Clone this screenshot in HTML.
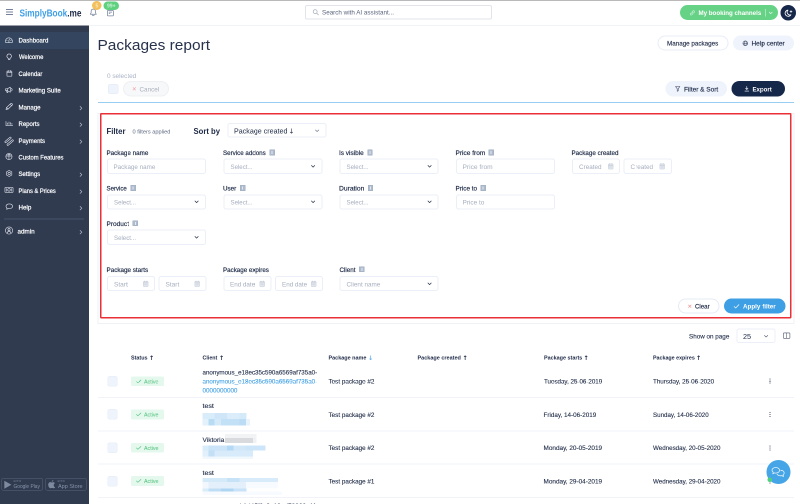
<!DOCTYPE html>
<html lang="en">
<head>
<meta charset="utf-8">
<title>Packages report</title>
<style>
html,body{margin:0;padding:0;}
body{width:800px;height:504px;overflow:hidden;position:relative;background:#fff;font-family:"Liberation Sans",sans-serif;color:#1f2b47;}
*{box-sizing:border-box;}
#wrap{position:absolute;left:0;top:0;width:1600px;height:1008px;transform:scale(0.5);transform-origin:0 0;will-change:transform;overflow:hidden;}
#zm{position:absolute;left:0;top:0;width:800px;height:504px;zoom:2;}
.a{position:absolute;}
.t{position:absolute;white-space:nowrap;}
svg{position:absolute;overflow:visible;}
.si *{fill:none;stroke:#d9dee7;stroke-width:0.65;stroke-linecap:round;stroke-linejoin:round;}
.inp{position:absolute;height:15.1px;border:1px solid #ebeff8;border-radius:2.500px;background:#fff;}
.info{position:absolute;width:5.4px;height:5.6px;border:0.5px solid #9fadc0;background:#aebbcc;border-radius:0.4px;}
.info:after{content:"";position:absolute;left:1.7px;top:0.9px;width:1px;height:2.9px;background:#e4eaf1;}
.cb{position:absolute;left:107.3px;width:10.3px;height:10.4px;border-radius:2px;background:#eef3fc;border:0.5px solid #e6edf9;}
.sep{position:absolute;left:98px;width:696px;height:1px;background:#f1f3f9;}
.badge{position:absolute;left:130.9px;width:33px;height:9.9px;border-radius:1.5px;background:#e5f8ed;}
.bl{position:absolute;}
</style>
</head>
<body>
<div id="wrap"><div id="zm">
<div class="a" style="left:0;top:0;width:800px;height:1px;background:#b9b9b9"></div>
<div class="a" style="left:89px;top:25px;width:711px;height:1px;background:#f0f3f8"></div>
<div class="a" style="left:5.9px;top:9.0px;width:7.2px;height:1px;background:#75819a"></div>
<div class="a" style="left:5.9px;top:11.45px;width:7.2px;height:1px;background:#75819a"></div>
<div class="a" style="left:5.9px;top:13.9px;width:7.2px;height:1px;background:#75819a"></div>
<div class="t" style="top:7.5px;line-height:11.0px;height:11.0px;font-size:10px;color:#3f9fe6;font-weight:bold;left:19.29px;transform-origin:0 50%;transform:scaleX(0.826);">SimplyBook<span style="color:#1d2946">.me</span></div>
<svg style="left:89.6px;top:8.4px" width="7.6" height="7.8" viewBox="0 0 15.2 15.6"><path d="M7.6 1.2c-2.6 0-4.3 2-4.3 4.6v2.9L1.6 11.400h12L11.900 8.700V5.800c0-2.600-1.700-4.600-4.300-4.600zM5.900 13.300a1.800 1.800 0 0 0 3.400 0" fill="none" stroke="#7a869d" stroke-width="1.500" stroke-linejoin="round" stroke-linecap="round"/></svg>
<div class="a" style="left:92.2px;top:1.2px;width:9.300px;height:8.600px;border-radius:5px;background:#f3c05e"></div>
<div class="t" style="top:2.5px;line-height:6.0px;height:6.0px;font-size:5.6px;color:#fce8bf;font-weight:bold;left:95.46px;transform-origin:0 50%;transform:scaleX(0.912);">5</div>
<svg style="left:107.2px;top:10px" width="6.800" height="6.300" viewBox="0 0 13.600 12.600"><rect x="0.800" y="0.800" width="12" height="11" rx="1.500" fill="none" stroke="#7a869d" stroke-width="1.500"/><path d="M3.600 4.300h6.500M3.600 7.300h3" stroke="#7a869d" stroke-width="1.400" fill="none"/></svg>
<div class="a" style="left:103.500px;top:1.500px;width:15.500px;height:8.300px;border-radius:5px;background:#5fd07e"></div>
<div class="t" style="top:2.5px;line-height:6.0px;height:6.0px;font-size:5.3px;color:#c6f1d2;font-weight:bold;left:107.06px;transform-origin:0 50%;transform:scaleX(0.949);">99+</div>
<div class="a" style="left:305px;top:4.900px;width:187px;height:14.800px;border:1px solid #e2e4e9;border-radius:2px;background:#fff"></div>
<svg style="left:312.500px;top:9.100px" width="6.400" height="6.400" viewBox="0 0 12 12"><circle cx="5" cy="5" r="3.700" fill="none" stroke="#9ca5b4" stroke-width="1.200"/><path d="M7.800 7.800L11 11" stroke="#9ca5b4" stroke-width="1.200" stroke-linecap="round"/></svg>
<div class="t" style="top:8.5px;line-height:7.5px;height:7.5px;font-size:6.5px;color:#59647c;left:321.96px;transform-origin:0 50%;transform:scaleX(0.967);">Search with AI assistant...</div>
<div class="a" style="left:680px;top:5px;width:98px;height:15px;background:#66d286;border-radius:8px"></div>
<svg style="left:689px;top:9.400px" width="6.800" height="6.800" viewBox="0 0 12 12"><path d="M4.800 7.200l2.400-2.400M4.200 5.400L2.600 7a1.700 1.700 0 0 0 2.400 2.400L6.600 7.800M7.800 6.600L9.400 5A1.700 1.700 0 0 0 7 2.600L5.400 4.200" fill="none" stroke="#d9f4e1" stroke-width="1" stroke-linecap="round"/></svg>
<div class="t" style="top:9.0px;line-height:7.5px;height:7.5px;font-size:6.6px;color:#fff;font-weight:bold;left:698.43px;transform-origin:0 50%;transform:scaleX(0.936);">My booking channels</div>
<div class="a" style="left:765.200px;top:8.800px;width:0.700px;height:7.600px;background:#a8e6b9"></div>
<svg style="left:768.600px;top:11.300px" width="4.400" height="3" viewBox="0 0 10 7"><path d="M1.500 1.500L5 5l3.500-3.500" fill="none" stroke="#e4f8ea" stroke-width="1.500" stroke-linecap="round"/></svg>
<div class="a" style="left:780.700px;top:5px;width:15.300px;height:15.300px;border-radius:8px;background:#16284a"></div>
<svg style="left:784px;top:8.400px" width="9" height="9" viewBox="0 0 18 18"><path d="M8 3.200a6.200 6.200 0 1 0 5.800 9.300A5.600 5.600 0 0 1 8 3.200z" fill="none" stroke="#fff" stroke-width="1.600" stroke-linejoin="round"/><path d="M14 4.200v4M12 6.200h4" stroke="#fff" stroke-width="1.400" stroke-linecap="round"/></svg>
<div class="a" style="left:0;top:25.300px;width:89px;height:479px;background:#303b50"></div>
<div class="a" style="left:0;top:32px;width:89px;height:17px;background:#34465f"></div>
<div class="t" style="top:36.5px;line-height:7.5px;height:7.5px;font-size:6.5px;color:#fff;left:18.28px;transform-origin:0 50%;transform:scaleX(0.939);-webkit-text-stroke:0.22px #fff;">Dashboard</div>
<div class="t" style="top:53.0px;line-height:7.5px;height:7.5px;font-size:6.5px;color:#fff;left:18.75px;transform-origin:0 50%;transform:scaleX(0.902);-webkit-text-stroke:0.22px #fff;">Welcome</div>
<div class="t" style="top:70.0px;line-height:7.5px;height:7.5px;font-size:6.5px;color:#fff;left:18.48px;transform-origin:0 50%;transform:scaleX(0.903);-webkit-text-stroke:0.22px #fff;">Calendar</div>
<div class="t" style="top:86.5px;line-height:7.5px;height:7.5px;font-size:6.5px;color:#fff;left:18.28px;transform-origin:0 50%;transform:scaleX(0.935);-webkit-text-stroke:0.22px #fff;">Marketing Suite</div>
<div class="t" style="top:103.5px;line-height:7.5px;height:7.5px;font-size:6.5px;color:#fff;left:18.28px;transform-origin:0 50%;transform:scaleX(0.935);-webkit-text-stroke:0.22px #fff;">Manage</div>
<svg style="left:79.700px;top:105.80px" width="3" height="4.400" viewBox="0 0 6 8.800"><path d="M1.200 1l3.600 3.400L1.200 7.800" fill="none" stroke="#c3cad6" stroke-width="1.300" stroke-linecap="round" stroke-linejoin="round"/></svg>
<div class="t" style="top:120.0px;line-height:7.5px;height:7.5px;font-size:6.5px;color:#fff;left:18.29px;transform-origin:0 50%;transform:scaleX(0.925);-webkit-text-stroke:0.22px #fff;">Reports</div>
<svg style="left:79.700px;top:122.40px" width="3" height="4.400" viewBox="0 0 6 8.800"><path d="M1.200 1l3.600 3.400L1.200 7.800" fill="none" stroke="#c3cad6" stroke-width="1.300" stroke-linecap="round" stroke-linejoin="round"/></svg>
<div class="t" style="top:137.0px;line-height:7.5px;height:7.5px;font-size:6.5px;color:#fff;left:18.29px;transform-origin:0 50%;transform:scaleX(0.918);-webkit-text-stroke:0.22px #fff;">Payments</div>
<svg style="left:79.700px;top:139.30px" width="3" height="4.400" viewBox="0 0 6 8.800"><path d="M1.200 1l3.600 3.400L1.200 7.800" fill="none" stroke="#c3cad6" stroke-width="1.300" stroke-linecap="round" stroke-linejoin="round"/></svg>
<div class="t" style="top:153.5px;line-height:7.5px;height:7.5px;font-size:6.5px;color:#fff;left:18.48px;transform-origin:0 50%;transform:scaleX(0.900);-webkit-text-stroke:0.22px #fff;">Custom Features</div>
<div class="t" style="top:170.0px;line-height:7.5px;height:7.5px;font-size:6.5px;color:#fff;left:18.52px;transform-origin:0 50%;transform:scaleX(0.922);-webkit-text-stroke:0.22px #fff;">Settings</div>
<svg style="left:79.700px;top:172.40px" width="3" height="4.400" viewBox="0 0 6 8.800"><path d="M1.200 1l3.600 3.400L1.200 7.800" fill="none" stroke="#c3cad6" stroke-width="1.300" stroke-linecap="round" stroke-linejoin="round"/></svg>
<div class="t" style="top:187.0px;line-height:7.5px;height:7.5px;font-size:6.5px;color:#fff;left:18.31px;transform-origin:0 50%;transform:scaleX(0.881);-webkit-text-stroke:0.22px #fff;">Plans &amp; Prices</div>
<svg style="left:79.700px;top:189.30px" width="3" height="4.400" viewBox="0 0 6 8.800"><path d="M1.200 1l3.600 3.400L1.200 7.800" fill="none" stroke="#c3cad6" stroke-width="1.300" stroke-linecap="round" stroke-linejoin="round"/></svg>
<div class="t" style="top:203.5px;line-height:7.5px;height:7.5px;font-size:6.5px;color:#fff;left:18.27px;transform-origin:0 50%;transform:scaleX(0.960);-webkit-text-stroke:0.22px #fff;">Help</div>
<svg style="left:79.700px;top:205.80px" width="3" height="4.400" viewBox="0 0 6 8.800"><path d="M1.200 1l3.600 3.400L1.200 7.800" fill="none" stroke="#c3cad6" stroke-width="1.300" stroke-linecap="round" stroke-linejoin="round"/></svg>
<div class="a" style="left:4px;top:218.700px;width:80px;height:0.800px;background:#46536a"></div>
<div class="t" style="top:227.5px;line-height:7.5px;height:7.5px;font-size:6.5px;color:#fff;left:17.26px;transform-origin:0 50%;transform:scaleX(0.968);-webkit-text-stroke:0.22px #fff;">admin</div>
<svg style="left:79.700px;top:230px" width="3" height="4.400" viewBox="0 0 6 8.800"><path d="M1.200 1l3.600 3.400L1.200 7.800" fill="none" stroke="#c3cad6" stroke-width="1.300" stroke-linecap="round" stroke-linejoin="round"/></svg>
<div class="t" style="top:36.0px;line-height:17.0px;height:17.0px;font-size:15.2px;color:#27324b;left:97.39px;transform-origin:0 50%;transform:scaleX(1.017);">Packages report</div>
<div class="a" style="left:657.5px;top:35.5px;width:71px;height:15px;border:1px solid #e8edf7;border-radius:8px;background:#fff"></div>
<div class="t" style="top:39.5px;line-height:7.5px;height:7.5px;font-size:6.8px;color:#1f2b47;left:666.89px;transform-origin:0 50%;transform:scaleX(0.923);-webkit-text-stroke:0.150px #1f2b47;">Manage packages</div>
<div class="a" style="left:733.2px;top:35.5px;width:61px;height:15px;border-radius:8px;background:#eef3fc"></div>
<svg style="left:742.4px;top:40.4px" width="5.6" height="5.6" viewBox="0 0 11.2 11.2"><circle cx="5.6" cy="5.6" r="4.7" fill="none" stroke="#3b4660" stroke-width="1.1"/><ellipse cx="5.6" cy="5.6" rx="2" ry="4.7" fill="none" stroke="#3b4660" stroke-width="1"/><path d="M0.9 5.6h9.400" stroke="#3b4660" stroke-width="1"/></svg>
<div class="t" style="top:39.5px;line-height:7.5px;height:7.5px;font-size:6.8px;color:#1f2b47;left:751.28px;transform-origin:0 50%;transform:scaleX(0.954);-webkit-text-stroke:0.150px #1f2b47;">Help center</div>
<div class="t" style="top:72.0px;line-height:7.5px;height:7.5px;font-size:6.5px;color:#a9b3c6;left:106.95px;transform-origin:0 50%;transform:scaleX(0.987);">0 selected</div>
<div class="a" style="left:108px;top:84px;width:10.4px;height:10.2px;border-radius:2px;background:#eef3fc;border:0.5px solid #e3eaf7"></div>
<div class="a" style="left:123px;top:81.2px;width:45.8px;height:15.4px;border-radius:8px;background:#f7f8fa;border:1px solid #eef0f3"></div>
<svg style="left:132.6px;top:87.2px" width="3.6" height="3.600" viewBox="0 0 7.200 7.200"><path d="M1 1l5.200 5.200M6.200 1L1 6.200" stroke="#f4a0a0" stroke-width="1.100" stroke-linecap="round"/></svg>
<div class="t" style="top:85.5px;line-height:7.5px;height:7.5px;font-size:6.8px;color:#a9afbb;left:139.72px;transform-origin:0 50%;transform:scaleX(0.929);">Cancel</div>
<div class="a" style="left:665.600px;top:81.100px;width:61.600px;height:15.500px;border-radius:8px;background:#eef3fc"></div>
<svg style="left:674.800px;top:86px" width="5.400" height="5.800" viewBox="0 0 10.800 11.600"><path d="M1 1h8.800L6.400 5.400v4.400L4.400 10.600V5.400z" fill="none" stroke="#3b4660" stroke-width="1.100" stroke-linejoin="round"/></svg>
<div class="t" style="top:85.5px;line-height:7.5px;height:7.5px;font-size:6.8px;color:#1f2b47;left:683.88px;transform-origin:0 50%;transform:scaleX(0.952);-webkit-text-stroke:0.150px #1f2b47;">Filter &amp; Sort</div>
<div class="a" style="left:731.600px;top:81.100px;width:53.600px;height:15.500px;border-radius:8px;background:#16284a"></div>
<svg style="left:744.600px;top:86.200px" width="4.600" height="5.600" viewBox="0 0 9.200 11.200"><path d="M4.600 0.800v6M2.200 4.600l2.400 2.400 2.400-2.400M0.800 10.200h7.600" fill="none" stroke="#fff" stroke-width="1.200" stroke-linecap="round" stroke-linejoin="round"/></svg>
<div class="t" style="top:85.5px;line-height:7.5px;height:7.5px;font-size:6.5px;color:#fff;font-weight:bold;left:752.43px;transform-origin:0 50%;transform:scaleX(0.934);">Export</div>
<div class="a" style="left:97.800px;top:102px;width:696.400px;height:1px;background:#98cef4"></div>
<div class="a" style="left:97.700px;top:112.800px;width:696.600px;height:211.200px;border:1px solid #eff1f5;background:#fff"></div>
<div class="a" style="left:100.100px;top:113.100px;width:691.500px;height:205.300px;border:1.800px solid #ea3036;border-radius:1.200px"></div>
<div class="t" style="top:127.0px;line-height:8.5px;height:8.5px;font-size:8px;color:#1d2946;font-weight:bold;left:106.31px;transform-origin:0 50%;transform:scaleX(0.971);">Filter</div>
<div class="t" style="top:128.5px;line-height:6.0px;height:6.0px;font-size:5.7px;color:#5d6880;left:132.3px;transform-origin:0 50%;transform:scaleX(0.989);">0 filters applied</div>
<div class="t" style="top:127.0px;line-height:8.5px;height:8.5px;font-size:8px;color:#1d2946;font-weight:bold;left:193.71px;transform-origin:0 50%;transform:scaleX(0.961);">Sort by</div>
<div class="inp" style="left:227.700px;top:122.900px;width:99px;height:14.700px"></div>
<div class="t" style="top:126.5px;line-height:8.5px;height:8.5px;font-size:7.6px;color:#1f2b47;left:234.24px;transform-origin:0 50%;transform:scaleX(0.938);">Package created</div>
<div class="t" style="top:127.5px;line-height:7.5px;height:7.5px;font-size:6.9px;color:#1f2b47;left:288.6px;transform-origin:0 50%;font-family:'DejaVu Sans',sans-serif;">↓</div>
<svg style="left:315px;top:129.4px" width="4.200" height="2.800" viewBox="0 0 8.400 5.600"><path d="M1 1l3.200 3.200L7.400 1" fill="none" stroke="#5d6880" stroke-width="1.2" stroke-linecap="round" stroke-linejoin="round"/></svg>
<div class="t" style="top:149.0px;line-height:7.5px;height:7.5px;font-size:6.7px;color:#1d2946;left:106.38px;transform-origin:0 50%;transform:scaleX(0.937);-webkit-text-stroke:0.180px #1d2946;">Package name</div>
<div class="inp" style="left:106.90px;top:158.7px;width:99px"></div>
<div class="t" style="top:163.0px;line-height:7.5px;height:7.5px;font-size:6.7px;color:#a7afbf;left:113.58px;transform-origin:0 50%;transform:scaleX(0.937);">Package name</div>
<div class="t" style="top:149.0px;line-height:7.5px;height:7.5px;font-size:6.7px;color:#1d2946;left:223.12px;transform-origin:0 50%;transform:scaleX(0.925);-webkit-text-stroke:0.180px #1d2946;">Service addons</div>
<div class="info" style="left:269.50px;top:149.70px"></div>
<div class="inp" style="left:223.40px;top:158.7px;width:99px"></div>
<div class="t" style="top:163.0px;line-height:7.5px;height:7.5px;font-size:6.7px;color:#a7afbf;left:230.33px;transform-origin:0 50%;transform:scaleX(0.910);">Select...</div>
<svg style="left:311.1px;top:165.1px" width="4.200" height="2.800" viewBox="0 0 8.400 5.600"><path d="M1 1l3.200 3.200L7.400 1" fill="none" stroke="#2a3550" stroke-width="1.5" stroke-linecap="round" stroke-linejoin="round"/></svg>
<div class="t" style="top:149.0px;line-height:7.5px;height:7.5px;font-size:6.7px;color:#1d2946;left:339.02px;transform-origin:0 50%;transform:scaleX(0.963);-webkit-text-stroke:0.180px #1d2946;">Is visible</div>
<div class="info" style="left:367.35px;top:149.70px"></div>
<div class="inp" style="left:339.60px;top:158.7px;width:99px"></div>
<div class="t" style="top:163.0px;line-height:7.5px;height:7.5px;font-size:6.7px;color:#a7afbf;left:346.53px;transform-origin:0 50%;transform:scaleX(0.910);">Select...</div>
<svg style="left:427.3px;top:165.1px" width="4.200" height="2.800" viewBox="0 0 8.400 5.600"><path d="M1 1l3.200 3.200L7.400 1" fill="none" stroke="#2a3550" stroke-width="1.5" stroke-linecap="round" stroke-linejoin="round"/></svg>
<div class="t" style="top:149.0px;line-height:7.5px;height:7.5px;font-size:6.7px;color:#1d2946;left:455.26px;transform-origin:0 50%;transform:scaleX(0.978);-webkit-text-stroke:0.180px #1d2946;">Price from</div>
<div class="info" style="left:488.55px;top:149.70px"></div>
<div class="inp" style="left:455.80px;top:158.7px;width:99px"></div>
<div class="t" style="top:163.0px;line-height:7.5px;height:7.5px;font-size:6.7px;color:#a7afbf;left:462.46px;transform-origin:0 50%;transform:scaleX(0.988);">Price from</div>
<div class="t" style="top:149.0px;line-height:7.5px;height:7.5px;font-size:6.7px;color:#1d2946;left:571.49px;transform-origin:0 50%;transform:scaleX(0.935);-webkit-text-stroke:0.180px #1d2946;">Package created</div>
<div class="inp" style="left:572.00px;top:158.7px;width:48.100px"></div>
<div class="t" style="top:163.0px;line-height:7.5px;height:7.5px;font-size:6.7px;color:#a7afbf;left:578.92px;transform-origin:0 50%;transform:scaleX(0.948);">Created</div>
<svg style="left:607.9px;top:163.1px" width="5.400" height="6.400" viewBox="0 0 5.400 6.400"><rect x="0.300" y="0.900" width="4.800" height="5.200" rx="0.600" fill="#e1e5ec" stroke="#ccd3de" stroke-width="0.500"/><path d="M0.300 2.400h4.800" stroke="#c3cbd8" stroke-width="0.600"/><path d="M1.500 0.200v1.300M3.900 0.200v1.300" stroke="#c3cbd8" stroke-width="0.700"/><path d="M1.500 4h2.400" stroke="#cfd5df" stroke-width="0.600"/></svg>
<div class="inp" style="left:623.70px;top:158.7px;width:48.100px"></div>
<div class="t" style="top:163.0px;line-height:7.5px;height:7.5px;font-size:6.7px;color:#a7afbf;left:630.62px;transform-origin:0 50%;transform:scaleX(0.948);">Created</div>
<svg style="left:659.6px;top:163.1px" width="5.400" height="6.400" viewBox="0 0 5.400 6.400"><rect x="0.300" y="0.900" width="4.800" height="5.200" rx="0.600" fill="#e1e5ec" stroke="#ccd3de" stroke-width="0.500"/><path d="M0.300 2.400h4.800" stroke="#c3cbd8" stroke-width="0.600"/><path d="M1.500 0.200v1.300M3.900 0.200v1.300" stroke="#c3cbd8" stroke-width="0.700"/><path d="M1.500 4h2.400" stroke="#cfd5df" stroke-width="0.600"/></svg>
<div class="t" style="top:184.5px;line-height:7.5px;height:7.5px;font-size:6.7px;color:#1d2946;left:106.63px;transform-origin:0 50%;transform:scaleX(0.910);-webkit-text-stroke:0.180px #1d2946;">Service</div>
<div class="info" style="left:130.55px;top:185.20px"></div>
<div class="inp" style="left:106.90px;top:194.3px;width:99px"></div>
<div class="t" style="top:198.5px;line-height:7.5px;height:7.5px;font-size:6.7px;color:#a7afbf;left:113.83px;transform-origin:0 50%;transform:scaleX(0.910);">Select...</div>
<svg style="left:194.6px;top:200.7px" width="4.200" height="2.800" viewBox="0 0 8.400 5.600"><path d="M1 1l3.200 3.200L7.400 1" fill="none" stroke="#2a3550" stroke-width="1.5" stroke-linecap="round" stroke-linejoin="round"/></svg>
<div class="t" style="top:184.5px;line-height:7.5px;height:7.5px;font-size:6.7px;color:#1d2946;left:222.93px;transform-origin:0 50%;transform:scaleX(0.936);-webkit-text-stroke:0.180px #1d2946;">User</div>
<div class="info" style="left:239.95px;top:185.20px"></div>
<div class="inp" style="left:223.40px;top:194.3px;width:99px"></div>
<div class="t" style="top:198.5px;line-height:7.5px;height:7.5px;font-size:6.7px;color:#a7afbf;left:230.33px;transform-origin:0 50%;transform:scaleX(0.910);">Select...</div>
<svg style="left:311.1px;top:200.7px" width="4.200" height="2.800" viewBox="0 0 8.400 5.600"><path d="M1 1l3.200 3.200L7.400 1" fill="none" stroke="#2a3550" stroke-width="1.5" stroke-linecap="round" stroke-linejoin="round"/></svg>
<div class="t" style="top:184.5px;line-height:7.5px;height:7.5px;font-size:6.7px;color:#1d2946;left:339.05px;transform-origin:0 50%;-webkit-text-stroke:0.180px #1d2946;">Duration</div>
<div class="info" style="left:367.85px;top:185.20px"></div>
<div class="inp" style="left:339.60px;top:194.3px;width:99px"></div>
<div class="t" style="top:198.5px;line-height:7.5px;height:7.5px;font-size:6.7px;color:#a7afbf;left:346.53px;transform-origin:0 50%;transform:scaleX(0.910);">Select...</div>
<svg style="left:427.3px;top:200.7px" width="4.200" height="2.800" viewBox="0 0 8.400 5.600"><path d="M1 1l3.200 3.200L7.400 1" fill="none" stroke="#2a3550" stroke-width="1.5" stroke-linecap="round" stroke-linejoin="round"/></svg>
<div class="t" style="top:184.5px;line-height:7.5px;height:7.5px;font-size:6.7px;color:#1d2946;left:455.28px;transform-origin:0 50%;transform:scaleX(0.950);-webkit-text-stroke:0.180px #1d2946;">Price to</div>
<div class="info" style="left:480.45px;top:185.20px"></div>
<div class="inp" style="left:455.80px;top:194.3px;width:99px"></div>
<div class="t" style="top:198.5px;line-height:7.5px;height:7.5px;font-size:6.7px;color:#a7afbf;left:462.47px;transform-origin:0 50%;transform:scaleX(0.964);">Price to</div>
<div class="t" style="top:220.0px;line-height:7.5px;height:7.5px;font-size:6.7px;color:#1d2946;left:106.37px;transform-origin:0 50%;transform:scaleX(0.972);-webkit-text-stroke:0.180px #1d2946;">Product</div>
<div class="info" style="left:132.65px;top:220.50px"></div>
<div class="inp" style="left:106.90px;top:229.7px;width:99px"></div>
<div class="t" style="top:234.0px;line-height:7.5px;height:7.5px;font-size:6.7px;color:#a7afbf;left:113.83px;transform-origin:0 50%;transform:scaleX(0.910);">Select...</div>
<svg style="left:194.6px;top:236.1px" width="4.200" height="2.800" viewBox="0 0 8.400 5.600"><path d="M1 1l3.200 3.200L7.400 1" fill="none" stroke="#2a3550" stroke-width="1.5" stroke-linecap="round" stroke-linejoin="round"/></svg>
<div class="t" style="top:266.0px;line-height:7.5px;height:7.5px;font-size:6.7px;color:#1d2946;left:106.38px;transform-origin:0 50%;transform:scaleX(0.939);-webkit-text-stroke:0.180px #1d2946;">Package starts</div>
<div class="inp" style="left:106.90px;top:276.1px;width:48.100px"></div>
<div class="t" style="top:280.5px;line-height:7.5px;height:7.5px;font-size:6.7px;color:#a7afbf;left:113.81px;transform-origin:0 50%;transform:scaleX(0.976);">Start</div>
<svg style="left:142.8px;top:280.5px" width="5.400" height="6.400" viewBox="0 0 5.400 6.400"><rect x="0.300" y="0.900" width="4.800" height="5.200" rx="0.600" fill="#e1e5ec" stroke="#ccd3de" stroke-width="0.500"/><path d="M0.300 2.400h4.800" stroke="#c3cbd8" stroke-width="0.600"/><path d="M1.500 0.200v1.300M3.900 0.200v1.300" stroke="#c3cbd8" stroke-width="0.700"/><path d="M1.500 4h2.400" stroke="#cfd5df" stroke-width="0.600"/></svg>
<div class="inp" style="left:158.60px;top:276.1px;width:48.100px"></div>
<div class="t" style="top:280.5px;line-height:7.5px;height:7.5px;font-size:6.7px;color:#a7afbf;left:165.51px;transform-origin:0 50%;transform:scaleX(0.976);">Start</div>
<svg style="left:194.5px;top:280.5px" width="5.400" height="6.400" viewBox="0 0 5.400 6.400"><rect x="0.300" y="0.900" width="4.800" height="5.200" rx="0.600" fill="#e1e5ec" stroke="#ccd3de" stroke-width="0.500"/><path d="M0.300 2.400h4.800" stroke="#c3cbd8" stroke-width="0.600"/><path d="M1.500 0.200v1.300M3.900 0.200v1.300" stroke="#c3cbd8" stroke-width="0.700"/><path d="M1.500 4h2.400" stroke="#cfd5df" stroke-width="0.600"/></svg>
<div class="t" style="top:266.0px;line-height:7.5px;height:7.5px;font-size:6.7px;color:#1d2946;left:222.89px;transform-origin:0 50%;transform:scaleX(0.927);-webkit-text-stroke:0.180px #1d2946;">Package expires</div>
<div class="inp" style="left:223.40px;top:276.1px;width:48.100px"></div>
<div class="t" style="top:280.5px;line-height:7.5px;height:7.5px;font-size:6.7px;color:#a7afbf;left:230.08px;transform-origin:0 50%;transform:scaleX(0.939);">End date</div>
<svg style="left:259.3px;top:280.5px" width="5.400" height="6.400" viewBox="0 0 5.400 6.400"><rect x="0.300" y="0.900" width="4.800" height="5.200" rx="0.600" fill="#e1e5ec" stroke="#ccd3de" stroke-width="0.500"/><path d="M0.300 2.400h4.800" stroke="#c3cbd8" stroke-width="0.600"/><path d="M1.500 0.200v1.300M3.900 0.200v1.300" stroke="#c3cbd8" stroke-width="0.700"/><path d="M1.500 4h2.400" stroke="#cfd5df" stroke-width="0.600"/></svg>
<div class="inp" style="left:275.10px;top:276.1px;width:48.100px"></div>
<div class="t" style="top:280.5px;line-height:7.5px;height:7.5px;font-size:6.7px;color:#a7afbf;left:281.78px;transform-origin:0 50%;transform:scaleX(0.939);">End date</div>
<svg style="left:311.0px;top:280.5px" width="5.400" height="6.400" viewBox="0 0 5.400 6.400"><rect x="0.300" y="0.900" width="4.800" height="5.200" rx="0.600" fill="#e1e5ec" stroke="#ccd3de" stroke-width="0.500"/><path d="M0.300 2.400h4.800" stroke="#c3cbd8" stroke-width="0.600"/><path d="M1.500 0.200v1.300M3.900 0.200v1.300" stroke="#c3cbd8" stroke-width="0.700"/><path d="M1.500 4h2.400" stroke="#cfd5df" stroke-width="0.600"/></svg>
<div class="t" style="top:266.0px;line-height:7.5px;height:7.5px;font-size:6.7px;color:#1d2946;left:339.32px;transform-origin:0 50%;transform:scaleX(0.936);-webkit-text-stroke:0.180px #1d2946;">Client</div>
<div class="info" style="left:359.20px;top:266.60px"></div>
<div class="inp" style="left:339.60px;top:276.1px;width:99px"></div>
<div class="t" style="top:280.5px;line-height:7.5px;height:7.5px;font-size:6.7px;color:#a7afbf;left:346.52px;transform-origin:0 50%;transform:scaleX(0.947);">Client name</div>
<svg style="left:427.3px;top:282.5px" width="4.200" height="2.800" viewBox="0 0 8.400 5.600"><path d="M1 1l3.200 3.200L7.400 1" fill="none" stroke="#2a3550" stroke-width="1.5" stroke-linecap="round" stroke-linejoin="round"/></svg>
<div class="a" style="left:678.100px;top:298.300px;width:41.500px;height:15.200px;border-radius:8px;background:#fff;border:1px solid #e6ebf6"></div>
<svg style="left:687.900px;top:304.300px" width="3.600" height="3.600" viewBox="0 0 7.200 7.200"><path d="M1 1l5.200 5.200M6.200 1L1 6.200" stroke="#f08a8a" stroke-width="1.100" stroke-linecap="round"/></svg>
<div class="t" style="top:302.5px;line-height:7.5px;height:7.5px;font-size:6.8px;color:#1f2b47;left:694.93px;transform-origin:0 50%;transform:scaleX(0.900);-webkit-text-stroke:0.180px #1f2b47;">Clear</div>
<div class="a" style="left:724px;top:298.300px;width:61.400px;height:15.200px;border-radius:8px;background:#3f9fe4"></div>
<svg style="left:733.600px;top:303.800px" width="6" height="4.600" viewBox="0 0 12 9.200"><path d="M1.200 5l3.200 3L10.800 1.200" fill="none" stroke="#fff" stroke-width="1.300" stroke-linecap="round" stroke-linejoin="round"/></svg>
<div class="t" style="top:302.5px;line-height:7.5px;height:7.5px;font-size:6.5px;color:#fff;font-weight:bold;left:742.96px;transform-origin:0 50%;transform:scaleX(0.964);">Apply filter</div>
<div class="t" style="top:332.5px;line-height:7.5px;height:7.5px;font-size:6.7px;color:#1f2b47;left:689.22px;transform-origin:0 50%;transform:scaleX(0.942);-webkit-text-stroke:0.120px #1f2b47;">Show on page</div>
<div class="inp" style="left:736.3px;top:328.5px;width:39px;height:14.7px"></div>
<div class="t" style="top:332.0px;line-height:8.5px;height:8.5px;font-size:7.6px;color:#1f2b47;left:743.06px;transform-origin:0 50%;transform:scaleX(0.958);">25</div>
<svg style="left:764.2px;top:334.8px" width="4.200" height="2.800" viewBox="0 0 8.400 5.600"><path d="M1 1l3.200 3.200L7.400 1" fill="none" stroke="#4a556c" stroke-width="1.2" stroke-linecap="round" stroke-linejoin="round"/></svg>
<svg style="left:782.9px;top:332.4px" width="7.3" height="6.2" viewBox="0 0 14.6 12.4"><rect x="0.8" y="0.8" width="13" height="10.8" rx="1" fill="none" stroke="#4a556c" stroke-width="1.2"/><path d="M7.300 0.800v10.800" stroke="#4a556c" stroke-width="1.100"/></svg>
<div class="t" style="top:354.5px;line-height:6.0px;height:6.0px;font-size:5.7px;color:#1d2946;font-weight:bold;left:130.76px;transform-origin:0 50%;transform:scaleX(0.950);">Status</div>
<div class="t" style="top:354.5px;line-height:7.0px;height:7.0px;font-size:6.2px;color:#1d2946;font-weight:bold;left:148.78px;transform-origin:0 50%;transform:scaleX(1.018);font-family:'DejaVu Sans',sans-serif;">↑</div>
<div class="t" style="top:354.5px;line-height:6.0px;height:6.0px;font-size:5.7px;color:#1d2946;font-weight:bold;left:202.51px;transform-origin:0 50%;transform:scaleX(0.937);">Client</div>
<div class="t" style="top:354.5px;line-height:7.0px;height:7.0px;font-size:6.2px;color:#1d2946;font-weight:bold;left:218.98px;transform-origin:0 50%;transform:scaleX(1.018);font-family:'DejaVu Sans',sans-serif;">↑</div>
<div class="t" style="top:354.5px;line-height:6.0px;height:6.0px;font-size:5.7px;color:#1d2946;font-weight:bold;left:328.41px;transform-origin:0 50%;transform:scaleX(0.959);">Package name</div>
<div class="t" style="top:354.5px;line-height:7.0px;height:7.0px;font-size:6.2px;color:#62b1ec;font-weight:bold;left:367.93px;transform-origin:0 50%;transform:scaleX(1.018);font-family:'DejaVu Sans',sans-serif;">↓</div>
<div class="t" style="top:354.5px;line-height:6.0px;height:6.0px;font-size:5.7px;color:#1d2946;font-weight:bold;left:417.66px;transform-origin:0 50%;transform:scaleX(0.965);">Package created</div>
<div class="t" style="top:354.5px;line-height:7.0px;height:7.0px;font-size:6.2px;color:#1d2946;font-weight:bold;left:462.43px;transform-origin:0 50%;transform:scaleX(1.018);font-family:'DejaVu Sans',sans-serif;">↑</div>
<div class="t" style="top:354.5px;line-height:6.0px;height:6.0px;font-size:5.7px;color:#1d2946;font-weight:bold;left:543.92px;transform-origin:0 50%;transform:scaleX(0.952);">Package starts</div>
<div class="t" style="top:354.5px;line-height:7.0px;height:7.0px;font-size:6.2px;color:#1d2946;font-weight:bold;left:583.68px;transform-origin:0 50%;transform:scaleX(1.018);font-family:'DejaVu Sans',sans-serif;">↑</div>
<div class="t" style="top:354.5px;line-height:6.0px;height:6.0px;font-size:5.7px;color:#1d2946;font-weight:bold;left:652.77px;transform-origin:0 50%;transform:scaleX(0.936);">Package expires</div>
<div class="t" style="top:354.5px;line-height:7.0px;height:7.0px;font-size:6.2px;color:#1d2946;font-weight:bold;left:696.08px;transform-origin:0 50%;transform:scaleX(1.018);font-family:'DejaVu Sans',sans-serif;">↑</div>
<div class="sep" style="top:397.0px"></div>
<div class="sep" style="top:430.3px"></div>
<div class="sep" style="top:463.7px"></div>
<div class="sep" style="top:497.0px"></div>
<div class="cb" style="top:376.00px"></div>
<div class="badge" style="top:376.25px"></div>
<svg style="left:136px;top:379.30px" width="5.400" height="3.800" viewBox="0 0 10.800 7.600"><path d="M1 4l2.800 2.600L9.800 1" fill="none" stroke="#4cc07a" stroke-width="1.200" stroke-linecap="round" stroke-linejoin="round"/></svg>
<div class="t" style="top:378.5px;line-height:6.0px;height:6.0px;font-size:5.8px;color:#4cc07a;left:144.2px;transform-origin:0 50%;transform:scaleX(0.919);">Active</div>
<div class="t" style="top:377.5px;line-height:7.5px;height:7.5px;font-size:6.7px;color:#1f2b47;left:328.61px;transform-origin:0 50%;transform:scaleX(0.942);-webkit-text-stroke:0.120px #1f2b47;">Test package #2</div>
<div class="t" style="top:377.5px;line-height:7.5px;height:7.5px;font-size:6.7px;color:#1f2b47;left:543.76px;transform-origin:0 50%;transform:scaleX(0.925);-webkit-text-stroke:0.120px #1f2b47;">Tuesday, 25-06-2019</div>
<div class="t" style="top:377.5px;line-height:7.5px;height:7.5px;font-size:6.7px;color:#1f2b47;left:652.96px;transform-origin:0 50%;transform:scaleX(0.935);-webkit-text-stroke:0.120px #1f2b47;">Thursday, 25-06-2020</div>
<div class="a" style="left:769.300px;top:378.65px;width:1.100px;height:1.100px;border-radius:0.300px;background:#3f4a62"></div>
<div class="a" style="left:769.300px;top:380.65px;width:1.100px;height:1.100px;border-radius:0.300px;background:#3f4a62"></div>
<div class="a" style="left:769.300px;top:382.65px;width:1.100px;height:1.100px;border-radius:0.300px;background:#3f4a62"></div>
<div class="cb" style="top:409.20px"></div>
<div class="badge" style="top:409.45px"></div>
<svg style="left:136px;top:412.50px" width="5.400" height="3.800" viewBox="0 0 10.800 7.600"><path d="M1 4l2.800 2.600L9.800 1" fill="none" stroke="#4cc07a" stroke-width="1.200" stroke-linecap="round" stroke-linejoin="round"/></svg>
<div class="t" style="top:411.5px;line-height:6.0px;height:6.0px;font-size:5.8px;color:#4cc07a;left:144.2px;transform-origin:0 50%;transform:scaleX(0.919);">Active</div>
<div class="t" style="top:411.0px;line-height:7.5px;height:7.5px;font-size:6.7px;color:#1f2b47;left:328.61px;transform-origin:0 50%;transform:scaleX(0.942);-webkit-text-stroke:0.120px #1f2b47;">Test package #2</div>
<div class="t" style="top:411.0px;line-height:7.5px;height:7.5px;font-size:6.7px;color:#1f2b47;left:543.38px;transform-origin:0 50%;transform:scaleX(0.941);-webkit-text-stroke:0.120px #1f2b47;">Friday, 14-06-2019</div>
<div class="t" style="top:411.0px;line-height:7.5px;height:7.5px;font-size:6.7px;color:#1f2b47;left:652.82px;transform-origin:0 50%;transform:scaleX(0.925);-webkit-text-stroke:0.120px #1f2b47;">Sunday, 14-06-2020</div>
<div class="a" style="left:769.300px;top:411.85px;width:1.100px;height:1.100px;border-radius:0.300px;background:#3f4a62"></div>
<div class="a" style="left:769.300px;top:413.85px;width:1.100px;height:1.100px;border-radius:0.300px;background:#3f4a62"></div>
<div class="a" style="left:769.300px;top:415.85px;width:1.100px;height:1.100px;border-radius:0.300px;background:#3f4a62"></div>
<div class="cb" style="top:442.60px"></div>
<div class="badge" style="top:442.85px"></div>
<svg style="left:136px;top:445.90px" width="5.400" height="3.800" viewBox="0 0 10.800 7.600"><path d="M1 4l2.800 2.600L9.800 1" fill="none" stroke="#4cc07a" stroke-width="1.200" stroke-linecap="round" stroke-linejoin="round"/></svg>
<div class="t" style="top:445.0px;line-height:6.0px;height:6.0px;font-size:5.8px;color:#4cc07a;left:144.2px;transform-origin:0 50%;transform:scaleX(0.919);">Active</div>
<div class="t" style="top:444.0px;line-height:7.5px;height:7.5px;font-size:6.7px;color:#1f2b47;left:328.61px;transform-origin:0 50%;transform:scaleX(0.942);-webkit-text-stroke:0.120px #1f2b47;">Test package #2</div>
<div class="t" style="top:444.0px;line-height:7.5px;height:7.5px;font-size:6.7px;color:#1f2b47;left:543.37px;transform-origin:0 50%;transform:scaleX(0.956);-webkit-text-stroke:0.120px #1f2b47;">Monday, 20-05-2019</div>
<div class="t" style="top:444.0px;line-height:7.5px;height:7.5px;font-size:6.7px;color:#1f2b47;left:653.1px;transform-origin:0 50%;transform:scaleX(0.928);-webkit-text-stroke:0.120px #1f2b47;">Wednesday, 20-05-2020</div>
<div class="a" style="left:769.300px;top:445.25px;width:1.100px;height:1.100px;border-radius:0.300px;background:#3f4a62"></div>
<div class="a" style="left:769.300px;top:447.25px;width:1.100px;height:1.100px;border-radius:0.300px;background:#3f4a62"></div>
<div class="a" style="left:769.300px;top:449.25px;width:1.100px;height:1.100px;border-radius:0.300px;background:#3f4a62"></div>
<div class="cb" style="top:475.90px"></div>
<div class="badge" style="top:476.15px"></div>
<svg style="left:136px;top:479.20px" width="5.400" height="3.800" viewBox="0 0 10.800 7.600"><path d="M1 4l2.800 2.600L9.800 1" fill="none" stroke="#4cc07a" stroke-width="1.200" stroke-linecap="round" stroke-linejoin="round"/></svg>
<div class="t" style="top:478.0px;line-height:6.0px;height:6.0px;font-size:5.8px;color:#4cc07a;left:144.2px;transform-origin:0 50%;transform:scaleX(0.919);">Active</div>
<div class="t" style="top:477.5px;line-height:7.5px;height:7.5px;font-size:6.7px;color:#1f2b47;left:328.61px;transform-origin:0 50%;transform:scaleX(0.942);-webkit-text-stroke:0.120px #1f2b47;">Test package #1</div>
<div class="t" style="top:477.5px;line-height:7.5px;height:7.5px;font-size:6.7px;color:#1f2b47;left:543.37px;transform-origin:0 50%;transform:scaleX(0.956);-webkit-text-stroke:0.120px #1f2b47;">Monday, 29-04-2019</div>
<div class="t" style="top:477.5px;line-height:7.5px;height:7.5px;font-size:6.7px;color:#1f2b47;left:653.1px;transform-origin:0 50%;transform:scaleX(0.928);-webkit-text-stroke:0.120px #1f2b47;">Wednesday, 29-04-2020</div>
<div class="a" style="left:769.300px;top:478.55px;width:1.100px;height:1.100px;border-radius:0.300px;background:#3f4a62"></div>
<div class="a" style="left:769.300px;top:480.55px;width:1.100px;height:1.100px;border-radius:0.300px;background:#3f4a62"></div>
<div class="a" style="left:769.300px;top:482.55px;width:1.100px;height:1.100px;border-radius:0.300px;background:#3f4a62"></div>
<div class="t" style="top:368.5px;line-height:7.5px;height:7.5px;font-size:6.7px;color:#1f2b47;left:202.27px;transform-origin:0 50%;transform:scaleX(0.928);-webkit-text-stroke:0.120px #1f2b47;">anonymous_e18ec35c590a6569af735a0-</div>
<div class="t" style="top:377.5px;line-height:7.5px;height:7.5px;font-size:6.7px;color:#3f9fe4;left:202.27px;transform-origin:0 50%;transform:scaleX(0.928);-webkit-text-stroke:0.100px #3f9fe4;">anonymous_e18ec35c590a6569af735a0-</div>
<div class="t" style="top:386.5px;line-height:7.5px;height:7.5px;font-size:6.7px;color:#3f9fe4;left:202.27px;transform-origin:0 50%;transform:scaleX(0.938);-webkit-text-stroke:0.100px #3f9fe4;">0000000000</div>
<div class="t" style="top:402.0px;line-height:7.5px;height:7.5px;font-size:6.7px;color:#1f2b47;left:202.39px;transform-origin:0 50%;transform:scaleX(1.053);-webkit-text-stroke:0.120px #1f2b47;">test</div>
<div class="t" style="top:436.0px;line-height:7.5px;height:7.5px;font-size:6.7px;color:#1f2b47;left:202.5px;transform-origin:0 50%;transform:scaleX(0.978);-webkit-text-stroke:0.120px #1f2b47;">Viktoria</div>
<div class="t" style="top:469.0px;line-height:7.5px;height:7.5px;font-size:6.7px;color:#1f2b47;left:202.39px;transform-origin:0 50%;transform:scaleX(1.053);-webkit-text-stroke:0.120px #1f2b47;">test</div>
<div class="t" style="top:502.0px;line-height:7.5px;height:7.5px;font-size:6.7px;color:#1f2b47;left:202.26px;transform-origin:0 50%;transform:scaleX(0.969);">anonymous_b1d47f0c3e18ad78866a1f-</div>
<div class="bl" style="left:202.3px;top:413px;width:12.6px;height:6.1px;background:#d9ecfa"></div>
<div class="bl" style="left:214.7px;top:413px;width:12.6px;height:6.1px;background:#cfe6f8"></div>
<div class="bl" style="left:227.1px;top:413px;width:12.6px;height:6.1px;background:#dbedfa"></div>
<div class="bl" style="left:239.5px;top:413px;width:6.8px;height:6.1px;background:#d5eaf9"></div>
<div class="bl" style="left:202.3px;top:418.9px;width:6.4px;height:6.4px;background:#e3f1fb"></div>
<div class="bl" style="left:208.5px;top:418.9px;width:6.4px;height:6.4px;background:#b9dcf5"></div>
<div class="bl" style="left:214.7px;top:418.9px;width:6.4px;height:6.4px;background:#d5eaf9"></div>
<div class="bl" style="left:220.9px;top:418.9px;width:18.8px;height:6.4px;background:#c2e0f6"></div>
<div class="bl" style="left:239.5px;top:418.9px;width:6.8px;height:6.4px;background:#bcdcf5"></div>
<div class="bl" style="left:246.1px;top:418.9px;width:4.1px;height:6.4px;background:#e8f3fc"></div>
<div class="bl" style="left:225px;top:434.1px;width:31.7px;height:4.1px;background:#f2f3f5"></div>
<div class="bl" style="left:225px;top:438px;width:28.3px;height:5.1px;background:#d8dade"></div>
<div class="bl" style="left:253.1px;top:438px;width:3.6px;height:5.1px;background:#f0f1f3"></div>
<div class="bl" style="left:202.3px;top:445.4px;width:6.4px;height:5.2px;background:#d9ecfa"></div>
<div class="bl" style="left:208.5px;top:445.4px;width:18.8px;height:5.2px;background:#cbe4f8"></div>
<div class="bl" style="left:227.1px;top:445.4px;width:6.4px;height:5.2px;background:#b5d9f4"></div>
<div class="bl" style="left:233.3px;top:445.4px;width:12.6px;height:5.2px;background:#d2e8f9"></div>
<div class="bl" style="left:245.7px;top:445.4px;width:19.7px;height:5.2px;background:#cde5f8"></div>
<div class="bl" style="left:202.3px;top:450.4px;width:6.4px;height:6.4px;background:#e1f0fb"></div>
<div class="bl" style="left:208.5px;top:450.4px;width:6.4px;height:6.4px;background:#c2dff6"></div>
<div class="bl" style="left:214.7px;top:450.4px;width:38.3px;height:6.4px;background:#d7ebfa"></div>
<div class="bl" style="left:202.3px;top:456.6px;width:50.7px;height:2.6px;background:#f0f7fd"></div>
<div class="bl" style="left:202.3px;top:477.8px;width:25.0px;height:4.5px;background:#d5eaf9"></div>
<div class="bl" style="left:227.1px;top:477.8px;width:12.6px;height:4.5px;background:#c6e2f7"></div>
<div class="bl" style="left:239.5px;top:477.8px;width:38.6px;height:4.5px;background:#d7ebfa"></div>
<div class="bl" style="left:202.3px;top:482.1px;width:6.4px;height:6.6px;background:#f1f7fd"></div>
<div class="bl" style="left:208.5px;top:482.1px;width:37.8px;height:6.6px;background:#e3f0fb"></div>
<div class="bl" style="left:246.1px;top:482.1px;width:32.0px;height:6.6px;background:#f7fafe"></div>
<div class="bl" style="left:202.3px;top:488.5px;width:6.4px;height:3.0px;background:#d9ecfa"></div>
<div class="bl" style="left:208.5px;top:488.5px;width:12.6px;height:3.0px;background:#bfdef6"></div>
<div class="bl" style="left:220.9px;top:488.5px;width:12.6px;height:3.0px;background:#aed6f3"></div>
<div class="bl" style="left:233.3px;top:488.5px;width:13.0px;height:3.0px;background:#c8e3f7"></div>
<div class="bl" style="left:202.3px;top:491.3px;width:79.9px;height:3.9px;background:#f7fafe"></div>
<div class="a" style="left:766.400px;top:460.100px;width:24px;height:24px;border-radius:12px;background:#45a5e6"></div>
<svg style="left:771.400px;top:467px" width="13.200" height="10.200" viewBox="0 0 13.200 10.200"><path d="M4.300 0.500c2.100 0 3.800 1.200 3.800 2.800s-1.700 2.800-3.800 2.800c-0.500 0-0.900-0.100-1.300-0.200l-1.700 0.900l0.400-1.600c-0.800-0.500-1.200-1.200-1.200-1.900c0-1.600 1.700-2.800 3.800-2.800z" fill="none" stroke="#eaf4fc" stroke-width="0.800" stroke-linejoin="round"/><path d="M9.300 3.300c1.900 0.100 3.400 1.200 3.400 2.700c0 0.700-0.400 1.400-1.100 1.900l0.400 1.600l-1.700-0.900c-0.400 0.100-0.800 0.200-1.300 0.200c-1.500 0-2.800-0.600-3.400-1.600" fill="none" stroke="#eaf4fc" stroke-width="0.800" stroke-linejoin="round" stroke-linecap="round"/></svg>
<div class="a" style="left:767.600px;top:477.500px;width:4.400px;height:4.400px;border-radius:3px;background:#4fd07c"></div>
<svg class="si" style="left:5.1px;top:37.6px" width="7.8" height="5.6" viewBox="0 0 7.8 5.6"><path d="M1 5.100h5.800a0.600 0.600 0 0 0 0.600-0.600v-0.700a3.500 3.500 0 0 0-7 0v0.700a0.600 0.600 0 0 0 0.600 0.600z"/><path d="M3.900 5v-2.200l0.700-1.300"/><path d="M1.600 2.600l0.500 0.400M6.200 2.600l-0.500 0.400"/></svg>
<svg class="si" style="left:6.7px;top:53.5px" width="5.3" height="6.7" viewBox="0 0 5.3 6.7"><path d="M2.650 0.450a2.200 2.200 0 0 0-1.300 4c0.300 0.300 0.400 0.600 0.400 1h1.800c0-0.400 0.100-0.700 0.400-1a2.200 2.200 0 0 0-1.300-4z"/><path d="M1.900 6.200h1.500"/></svg>
<svg class="si" style="left:6.4px;top:70.2px" width="5.8" height="6.7" viewBox="0 0 5.8 6.7"><rect x="0.450" y="1.100" width="4.900" height="5.100" rx="0.600"/><path d="M0.500 2.700h4.800M1.700 0.400v1.300M4.100 0.400v1.300"/></svg>
<svg class="si" style="left:5px;top:86.6px" width="7.9" height="6.5" viewBox="0 0 7.9 6.5"><path d="M0.500 2.300h1.800l3-1.600v5l-3-1.600h-1.800z"/><path d="M1.500 4.100l0.500 1.900h0.900l-0.300-1.900"/><path d="M6.300 1.900c0.600 0.300 0.900 0.800 0.900 1.300s-0.300 1-0.900 1.300"/><path d="M2.300 2.300v1.800"/></svg>
<svg class="si" style="left:5.3px;top:103.2px" width="7.5" height="7.1" viewBox="0 0 7.5 7.1"><path d="M0.500 6.600l0.500-2L5.300 0.500a0.700 0.700 0 0 1 1 0l0.500 0.500a0.700 0.700 0 0 1 0 1L2.500 6.100z"/><path d="M4.600 1.200l1.500 1.500M1 4.600l1.500 1.500"/></svg>
<svg class="si" style="left:5.3px;top:120.8px" width="7.6" height="5.1" viewBox="0 0 7.6 5.1"><g style="stroke:#8f9aae"><path d="M0.500 0.400v4.200h6.700"/><path d="M2 3.400v-1.400M3.500 3.400v-2.400M5 3.400v-1.800M6.400 3.400v-1"/></g></svg>
<svg class="si" style="left:5px;top:137.6px" width="9" height="8.4" viewBox="0 0 9 8.4"><rect x="-0.900" y="1.650" width="7.800" height="1.500" rx="0.750" transform="rotate(-40 3 2.400)"/><rect x="1.300" y="4.350" width="7.800" height="1.500" rx="0.750" transform="rotate(-40 5.200 5.100)"/></svg>
<svg class="si" style="left:5px;top:152.9px" width="7.9" height="7" viewBox="0 0 7.9 7"><circle cx="3.950" cy="3.500" r="3.100"/><path d="M1.400 3h5.100M3.950 1.800v4.600M2.900 1.800c0-0.800 1.050-0.600 1.050 0.300c0-0.900 1.050-1.100 1.050-0.300"/></svg>
<svg class="si" style="left:5.9px;top:170.1px" width="6.3" height="6.9" viewBox="0 0 6.3 6.9"><path d="M3.150 0.400l2.650 1.500v3.100l-2.650 1.500l-2.650-1.500v-3.100z"/><circle cx="3.150" cy="3.450" r="1.200"/></svg>
<svg class="si" style="left:4.4px;top:187px" width="9" height="5.8" viewBox="0 0 9 5.8"><rect x="0.450" y="0.450" width="8.100" height="4.900" rx="0.500"/><circle cx="4.500" cy="2.900" r="1.300"/><path d="M1.800 1.600v2.600M7.200 1.600v2.600"/></svg>
<svg class="si" style="left:5.5px;top:203.3px" width="7.4" height="6.4" viewBox="0 0 7.4 6.4"><path d="M1.500 4.700c-0.600-0.500-1-1.200-1-1.900c0-1.400 1.500-2.400 3.300-2.400s3.300 1 3.300 2.400s-1.500 2.400-3.300 2.400c-0.400 0-0.800 0-1.100-0.100l-1.600 0.700z"/></svg>
<svg class="si" style="left:5px;top:226.5px" width="8.1" height="8" viewBox="0 0 8.1 8"><circle cx="4.050" cy="4" r="3.600"/><circle cx="4.050" cy="3.100" r="1.100"/><path d="M2.200 6.400c0.200-1.100 0.900-1.600 1.850-1.600s1.650 0.500 1.850 1.600"/></svg>
<div class="a" style="left:1.3px;top:478.100px;width:41.6px;height:12.500px;border:0.700px solid #5a667c;border-radius:1.600px"></div>
<div class="a" style="left:45.3px;top:478.100px;width:41.4px;height:12.500px;border:0.700px solid #5a667c;border-radius:1.600px"></div>
<svg style="left:3.800px;top:480.400px" width="7.800" height="8.600" viewBox="0 0 7.800 8.600"><path d="M0.300 0.300L7.400 4.300L0.300 8.300z" fill="#7e8aa0"/></svg>
<div class="t" style="top:480.0px;line-height:2.5px;height:2.5px;font-size:2.4px;color:#7e8aa0;left:13.74px;transform-origin:0 50%;transform:scaleX(0.632);">GET IT ON</div>
<div class="t" style="top:483.0px;line-height:6.0px;height:6.0px;font-size:5.6px;color:#8995aa;left:13.58px;transform-origin:0 50%;transform:scaleX(0.866);">Google Play</div>
<svg style="left:48.100px;top:480px" width="7.300" height="8.300" viewBox="0 0 7.300 8.300"><path d="M5 2.100c0.900 0 1.600 0.500 2 1c-0.900 0.500-1.300 1.200-1.300 2.100c0 1 0.600 1.800 1.500 2.100c-0.400 0.900-1.100 1-1.600 1c-0.600 0-0.900-0.300-1.600-0.300c-0.700 0-1 0.300-1.600 0.300c-1.100 0-2.200-1.900-2.200-3.500c0-1.700 1.100-2.700 2.200-2.700c0.700 0 1.200 0.400 1.600 0.400c0.300 0 0.600-0.400 1-0.400zM3.700 1.800c0-1 0.800-1.700 1.600-1.700c0.100 0.900-0.700 1.800-1.600 1.700z" fill="#7e8aa0"/></svg>
<div class="t" style="top:480.0px;line-height:2.5px;height:2.5px;font-size:2.4px;color:#7e8aa0;left:57.74px;transform-origin:0 50%;transform:scaleX(0.615);">GET IT ON</div>
<div class="t" style="top:483.0px;line-height:6.0px;height:6.0px;font-size:5.6px;color:#8995aa;left:57.8px;transform-origin:0 50%;transform:scaleX(0.988);">App Store</div>
</div></div>
</body>
</html>
